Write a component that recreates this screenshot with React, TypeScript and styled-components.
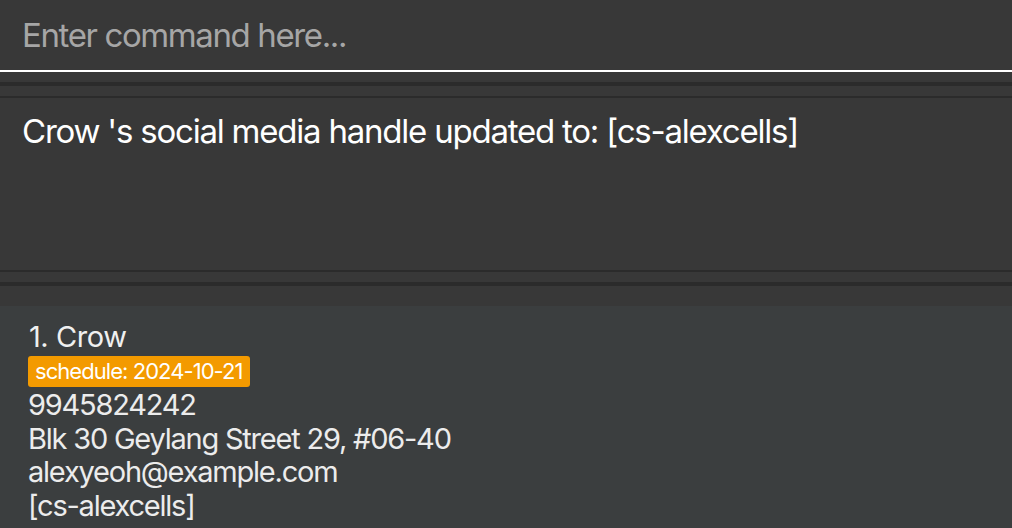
import React from "react";
import styled, { createGlobalStyle } from "styled-components";

const GlobalStyle = createGlobalStyle`
  html, body {
    margin: 0;
    padding: 0;
    background: #383838;
    overflow: hidden;
  }
  * { box-sizing: border-box; }
`;

const Page = styled.div`
  width: 1012px;
  height: 528px;
  display: flex;
  flex-direction: column;
  background: #383838;
  font-family: Inter, "Open Sans", sans-serif;
  letter-spacing: -0.04em;
  overflow: hidden;
`;

const CommandBox = styled.div`
  height: 72px;
  flex: none;
  border-bottom: 2px solid #ffffff;
  padding-left: 22px;
  display: flex;
  align-items: center;
`;

const CommandInput = styled.input`
  width: 100%;
  height: 70px;
  line-height: 70px;
  background: transparent;
  border: none;
  outline: none;
  padding: 0;
  color: #ffffff;
  font-family: inherit;
  font-size: 33px;
  letter-spacing: -0.042em;
  &::placeholder {
    color: #a6a6a6;
    opacity: 1;
  }
`;

const Divider = styled.div<{ $thick?: boolean; $gap: number }>`
  flex: none;
  margin-top: ${(p) => p.$gap}px;
  height: ${(p) => (p.$thick ? 4 : 2)}px;
  background: #2b2b2b;
`;

const ResultDisplay = styled.div`
  height: 172px;
  flex: none;
  padding: 13px 22px 0;
  color: #ffffff;
  font-size: 33px;
  line-height: 40px;
  letter-spacing: -0.037em;
`;

const ListArea = styled.div`
  flex: 1;
  margin-top: 20px;
  background: #3b3e3f;
  padding: 14px 28px 0;
  display: flex;
  flex-direction: column;
  align-items: flex-start;
`;

const Name = styled.div`
  color: #f0f0f0;
  font-size: 29px;
  line-height: 34px;
  letter-spacing: -0.015em;
  padding-left: 1px;
`;

const Tags = styled.div`
  display: flex;
  gap: 6px;
  margin-top: 2px;
  margin-bottom: 1px;
`;

const Tag = styled.span`
  background: #f39a00;
  color: #ffffff;
  font-size: 22px;
  line-height: 31px;
  height: 31px;
  padding: 0 7px;
  border-radius: 3px;
  letter-spacing: -0.043em;
`;

const Detail = styled.div`
  color: #ececec;
  font-size: 29px;
  line-height: 33.5px;
  letter-spacing: -0.042em;
`;

export default function App() {
  return (
    <Page>
      <GlobalStyle />
      <CommandBox>
        <CommandInput placeholder="Enter command here..." />
      </CommandBox>
      <Divider $thick $gap={10} />
      <Divider $gap={10} />
      <ResultDisplay>Crow 's social media handle updated to: [cs-alexcells]</ResultDisplay>
      <Divider $gap={0} />
      <Divider $thick $gap={10} />
      <ListArea>
        <Name>1. Crow</Name>
        <Tags>
          <Tag>schedule: 2024-10-21</Tag>
        </Tags>
        <Detail>9945824242</Detail>
        <Detail>Blk 30 Geylang Street 29, #06-40</Detail>
        <Detail>alexyeoh@example.com</Detail>
        <Detail>[cs-alexcells]</Detail>
      </ListArea>
    </Page>
  );
}
